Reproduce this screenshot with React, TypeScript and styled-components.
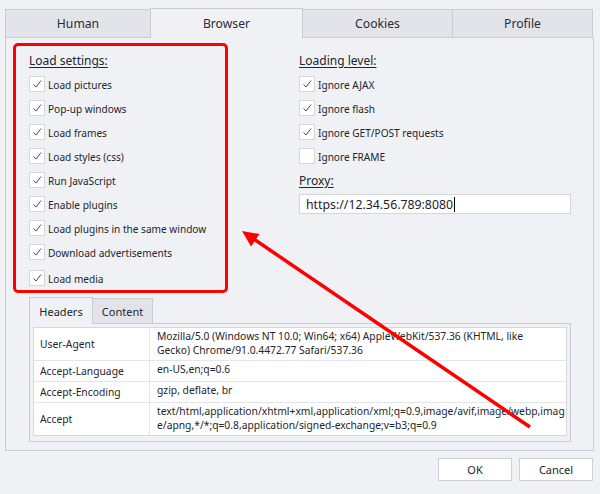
import React from "react";
import styled, { createGlobalStyle } from "styled-components";

const Global = createGlobalStyle`
  html, body { margin: 0; padding: 0; background: #f0f1f5; }
  body { width: 600px; height: 494px; overflow: hidden; font-family: "Noto Sans", "Open Sans", sans-serif; color: #23252e; }
  * { box-sizing: border-box; }
`;

const Page = styled.div`
  position: relative;
  width: 600px;
  height: 494px;
  padding: 8px 7px 0 5px;
`;

const TabBar = styled.div`
  display: flex;
  align-items: flex-end;
  height: 30px;
`;

const Tab = styled.div<{ $active?: boolean; $w: number }>`
  width: ${(p) => p.$w}px;
  height: ${(p) => (p.$active ? 30 : 29)}px;
  display: flex;
  align-items: center;
  justify-content: center;
  font-size: 12.2px;
  color: #2a2c35;
  background: ${(p) => (p.$active ? "#f0f1f5" : "#e3e4e9")};
  border: 1px solid #c9ccd4;
  border-bottom: ${(p) => (p.$active ? "none" : "1px solid #c9ccd4")};
  margin-right: -1px;
  position: relative;
  z-index: ${(p) => (p.$active ? 2 : 1)};
  padding-bottom: ${(p) => (p.$active ? 1 : 0)}px;
`;

const Panel = styled.div`
  margin-top: -1px;
  width: 589px;
  height: 414px;
  border: 1px solid #c9ccd4;
  background: #f0f1f5;
  padding: 5px 21px 8px 7px;
  display: flex;
  flex-direction: column;
`;

const TopRow = styled.div`
  display: flex;
  align-items: flex-start;
`;

const Highlight = styled.div`
  width: 215px;
  height: 250px;
  border: 3px solid #ff0000;
  border-radius: 5px;
  padding: 2px 0 0 13px;
  display: flex;
  flex-direction: column;
`;

const RightCol = styled.div`
  margin-left: 71px;
  width: 272px;
  display: flex;
  flex-direction: column;
  padding-top: 5px;
`;

const Heading = styled.div`
  height: 24px;
  display: flex;
  align-items: center;
  font-size: 12px;
  text-decoration: underline;
  text-underline-offset: 2px;
  color: #23252e;
`;

const Row = styled.div<{ $tall?: boolean }>`
  height: ${(p) => (p.$tall ? 25 : 24)}px;
  display: flex;
  align-items: ${(p) => (p.$tall ? "flex-end" : "center")};
  padding-bottom: ${(p) => (p.$tall ? 3 : 0)}px;
  font-size: 10.1px;
`;

const Label = styled.span`
  padding-top: 1px;
`;

const Box = styled.span`
  width: 16px;
  height: 16px;
  border: 1px solid #d3d6dc;
  background: #ffffff;
  margin-right: 3px;
  display: inline-flex;
  align-items: center;
  justify-content: center;
  flex: none;
`;

const ProxyField = styled.div`
  margin-top: 2px;
  width: 272px;
  height: 20px;
  border: 1px solid #d3d6dc;
  background: #ffffff;
  display: flex;
  align-items: center;
  padding-left: 6px;
  font-size: 12.3px;
  color: #1f2029;
`;

const Caret = styled.span`
  display: inline-block;
  width: 1px;
  height: 15px;
  background: #000;
  margin-left: 1px;
`;

const HeadersArea = styled.div`
  margin: 4px 0 0 16px;
  width: 542px;
  display: flex;
  flex-direction: column;
`;

const SubTabs = styled.div`
  display: flex;
  align-items: flex-end;
  height: 27px;
`;

const SubTab = styled.div<{ $active?: boolean; $w: number }>`
  width: ${(p) => p.$w}px;
  height: ${(p) => (p.$active ? 27 : 26)}px;
  display: flex;
  align-items: center;
  justify-content: center;
  font-size: 11px;
  background: ${(p) => (p.$active ? "#f0f1f5" : "#e3e4e9")};
  border: 1px solid #c9ccd4;
  border-bottom: ${(p) => (p.$active ? "none" : "1px solid #c9ccd4")};
  margin-right: -1px;
  position: relative;
  z-index: ${(p) => (p.$active ? 2 : 1)};
`;

const Group = styled.div`
  margin-top: -1px;
  height: 119px;
  border: 1px solid #c9ccd4;
  padding: 3px 3px 5px 3px;
`;

const Table = styled.div`
  display: grid;
  grid-template-columns: 116px 1fr;
  background: #ffffff;
  border: 1px solid #d5d8de;
  font-size: 10.3px;
  color: #23252e;
`;

const KeyCell = styled.div<{ $last?: boolean }>`
  display: flex;
  align-items: center;
  padding: 1px 7px 1px 6px;
  min-height: ${(p) => (p.$last ? 32 : 21)}px;
  line-height: 14px;
  border-right: 1px solid #e3e5ea;
  border-bottom: ${(p) => (p.$last ? "none" : "1px solid #e3e5ea")};
`;

const ValueCell = styled.div<{ $last?: boolean }>`
  padding: 1px 7px 3px 7px;
  line-height: 14px;
  white-space: nowrap;
  overflow: hidden;
  border-bottom: ${(p) => (p.$last ? "none" : "1px solid #e3e5ea")};
`;

const Footer = styled.div`
  display: flex;
  justify-content: flex-end;
  gap: 7px;
  margin-top: 7px;
`;

const Button = styled.div`
  width: 74px;
  height: 23px;
  background: #ffffff;
  border: 1px solid #cdd0d6;
  display: flex;
  align-items: center;
  justify-content: center;
  font-size: 11px;
  color: #23252e;
`;

const Overlay = styled.svg`
  position: absolute;
  left: 0;
  top: 0;
  pointer-events: none;
`;

const Check = () => (
  <svg width="12" height="12" viewBox="0 0 12 12">
    <path d="M2.5 6.5 L5 9 L10 2.5" fill="none" stroke="#4a4c55" strokeWidth="1" />
  </svg>
);

const CheckRow: React.FC<{ label: string; checked?: boolean; tall?: boolean }> = ({
  label,
  checked = true,
  tall,
}) => (
  <Row $tall={tall}>
    <Box>{checked && <Check />}</Box>
    <Label>{label}</Label>
  </Row>
);

const loadSettings = [
  "Load pictures",
  "Pop-up windows",
  "Load frames",
  "Load styles (css)",
  "Run JavaScript",
  "Enable plugins",
  "Load plugins in the same window",
  "Download advertisements",
  "Load media",
];

const headers: { key: string; lines: string[] }[] = [
  {
    key: "User-Agent",
    lines: [
      "Mozilla/5.0 (Windows NT 10.0; Win64; x64) AppleWebKit/537.36 (KHTML, like",
      "Gecko) Chrome/91.0.4472.77 Safari/537.36",
    ],
  },
  { key: "Accept-Language", lines: ["en-US,en;q=0.6"] },
  { key: "Accept-Encoding", lines: ["gzip, deflate, br"] },
  {
    key: "Accept",
    lines: [
      "text/html,application/xhtml+xml,application/xml;q=0.9,image/avif,image/webp,imag",
      "e/apng,*/*;q=0.8,application/signed-exchange;v=b3;q=0.9",
    ],
  },
];

export default function App() {
  return (
    <>
      <Global />
      <Page>
        <TabBar>
          <Tab $w={146}>Human</Tab>
          <Tab $w={153} $active>
            Browser
          </Tab>
          <Tab $w={151}>Cookies</Tab>
          <Tab $w={141}>Profile</Tab>
        </TabBar>
        <Panel>
          <TopRow>
            <Highlight>
              <Heading>Load settings:</Heading>
              {loadSettings.map((l, i) => (
                <CheckRow key={l} label={l} tall={i === loadSettings.length - 1} />
              ))}
            </Highlight>
            <RightCol>
              <Heading>Loading level:</Heading>
              <CheckRow label="Ignore AJAX" />
              <CheckRow label="Ignore flash" />
              <CheckRow label="Ignore GET/POST requests" />
              <CheckRow label="Ignore FRAME" checked={false} />
              <Heading>Proxy:</Heading>
              <ProxyField>
                https://12.34.56.789:8080
                <Caret />
              </ProxyField>
            </RightCol>
          </TopRow>
          <HeadersArea>
            <SubTabs>
              <SubTab $w={64} $active>
                Headers
              </SubTab>
              <SubTab $w={61}>Content</SubTab>
            </SubTabs>
            <Group>
              <Table>
                {headers.map((h, i) => {
                  const last = i === headers.length - 1;
                  return (
                    <React.Fragment key={h.key}>
                      <KeyCell $last={last}>{h.key}</KeyCell>
                      <ValueCell $last={last}>
                        {h.lines.map((ln, j) => (
                          <div key={j}>{ln}</div>
                        ))}
                      </ValueCell>
                    </React.Fragment>
                  );
                })}
              </Table>
            </Group>
          </HeadersArea>
        </Panel>
        <Footer>
          <Button>OK</Button>
          <Button>Cancel</Button>
        </Footer>
        <Overlay width="600" height="494" viewBox="0 0 600 494">
          <line x1="530" y1="427" x2="253" y2="238.5" stroke="#ff0000" strokeWidth="3.5" />
          <polygon points="242,231 259.5,234 251,246.5" fill="#ff0000" />
        </Overlay>
      </Page>
    </>
  );
}
